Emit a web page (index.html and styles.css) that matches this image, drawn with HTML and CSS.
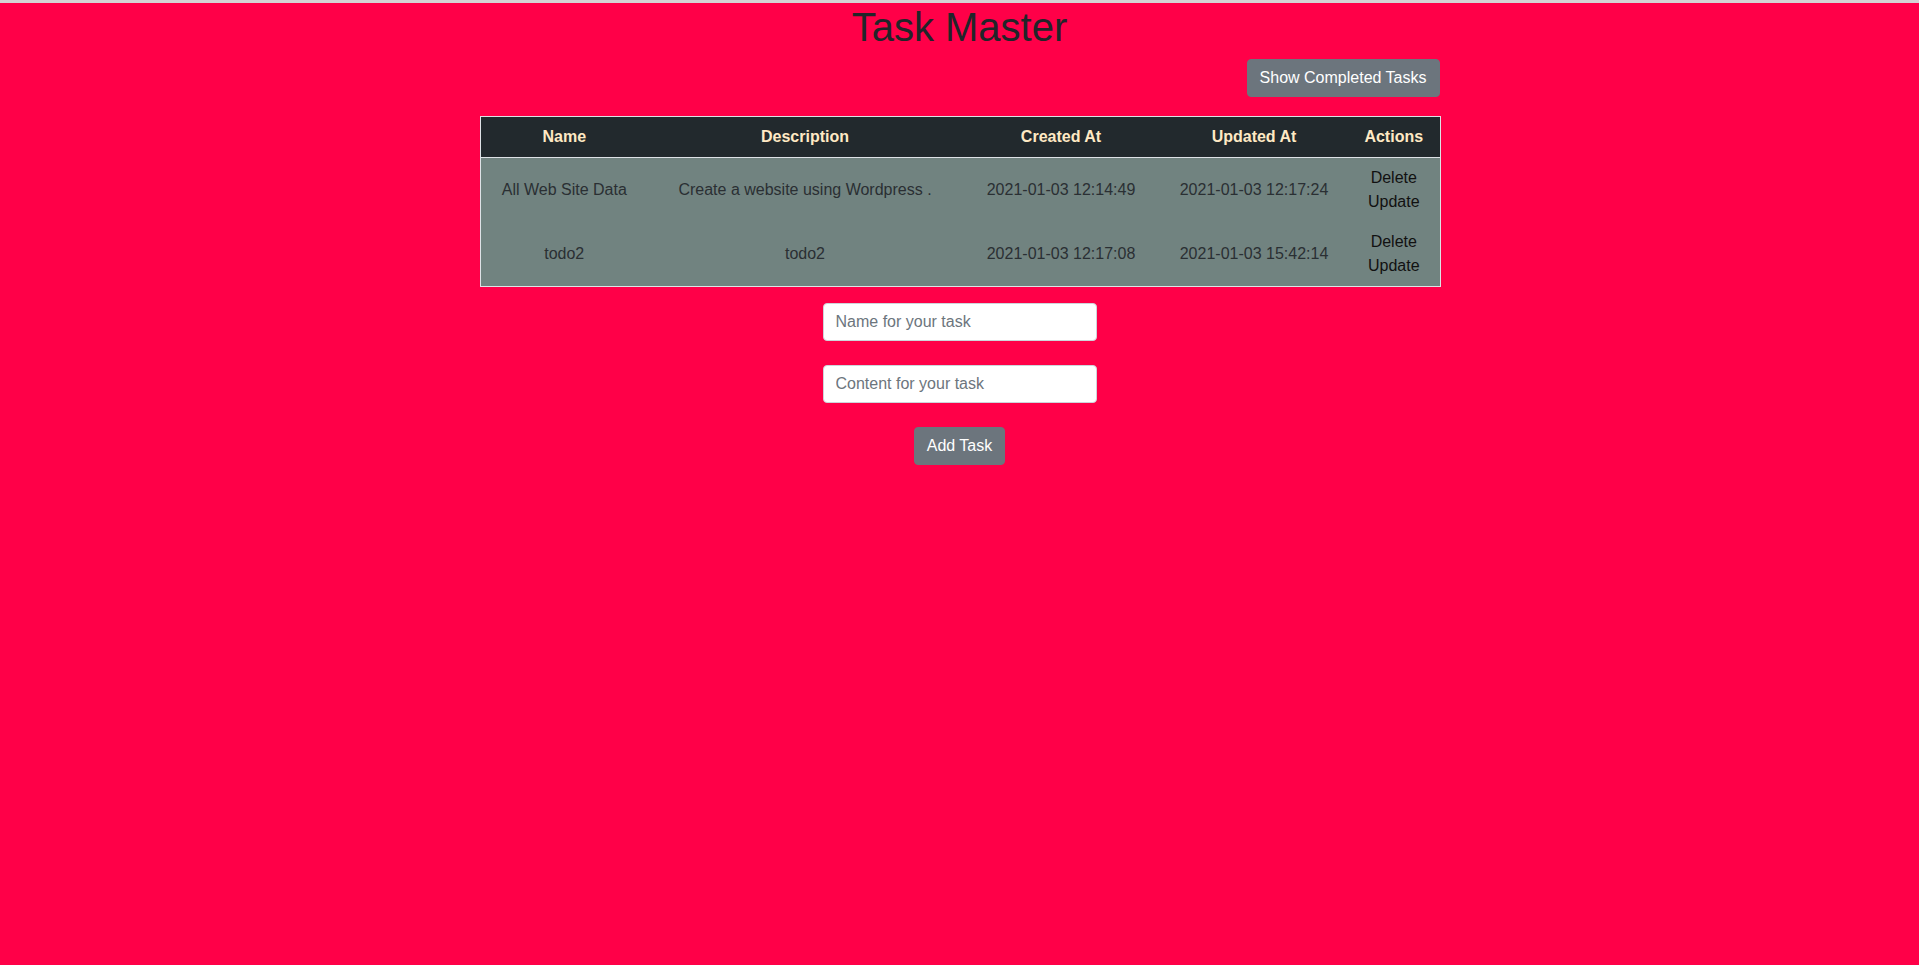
FILE: index.html
```html
<!DOCTYPE html>
<html lang="en">
<head>
<meta charset="utf-8">
<title>Task Master</title>
<link rel="stylesheet" href="styles.css">
</head>
<body>
  <h1 class="title">Task Master</h1>
  <div class="container">
    <div class="toolbar">
      <button class="btn">Show Completed Tasks</button>
    </div>
    <table class="tasks">
      <colgroup>
        <col class="c-name">
        <col class="c-desc">
        <col class="c-created">
        <col class="c-updated">
        <col class="c-actions">
      </colgroup>
      <thead>
        <tr>
          <th>Name</th>
          <th>Description</th>
          <th>Created At</th>
          <th>Updated At</th>
          <th>Actions</th>
        </tr>
      </thead>
      <tbody>
        <tr>
          <td>All Web Site Data</td>
          <td>Create a website using Wordpress .</td>
          <td>2021-01-03 12:14:49</td>
          <td>2021-01-03 12:17:24</td>
          <td class="actions"><a href="#">Delete</a><br><a href="#">Update</a></td>
        </tr>
        <tr>
          <td>todo2</td>
          <td>todo2</td>
          <td>2021-01-03 12:17:08</td>
          <td>2021-01-03 15:42:14</td>
          <td class="actions"><a href="#">Delete</a><br><a href="#">Update</a></td>
        </tr>
      </tbody>
    </table>
    <form class="task-form">
      <input class="field" type="text" placeholder="Name for your task">
      <input class="field" type="text" placeholder="Content for your task">
      <button class="btn" type="button">Add Task</button>
    </form>
  </div>
</body>
</html>
```
FILE: styles.css
```css
html, body {
  margin: 0;
  padding: 0;
}
body {
  background: #ff0048;
  border-top: 3px solid #d4d4d4;
  min-height: 962px;
  font-family: "Liberation Sans", Arial, sans-serif;
  font-size: 16px;
  line-height: 1.5;
  color: #212529;
}
.title {
  margin: 0 0 8px;
  text-align: center;
  font-size: 40px;
  font-weight: 500;
  line-height: 1.2;
  color: #212529;
}
.container {
  width: 960px;
  margin: 0 auto;
}
.toolbar {
  display: flex;
  justify-content: flex-end;
  margin-bottom: 19px;
}
.btn {
  font-family: inherit;
  font-size: 16px;
  line-height: 24px;
  padding: 6px 12px;
  border: 1px solid #6c757d;
  border-radius: 4px;
  background: #6c757d;
  color: #fff;
  cursor: pointer;
}
.tasks {
  width: 960px;
  border-collapse: collapse;
  table-layout: fixed;
  border: 1px solid #dee2e6;
  text-align: center;
}
.c-name { width: 168px; }
.c-desc { width: 314px; }
.c-created { width: 198px; }
.c-updated { width: 188px; }
.c-actions { width: 92px; }
.tasks thead th {
  background: #22292d;
  color: #ffe9c4;
  font-weight: 700;
  padding: 8px 4px;
  border-bottom: 1px solid #dee2e6;
}
.tasks tbody td {
  background: #718380;
  color: #2a2f33;
  padding: 8px 4px;
}
.actions a {
  color: #111;
  text-decoration: none;
}
.task-form {
  display: flex;
  flex-direction: column;
  align-items: center;
  gap: 24px;
  margin-top: 16px;
}
.field {
  box-sizing: border-box;
  width: 274px;
  height: 38px;
  padding: 6px 12px;
  font-family: inherit;
  font-size: 16px;
  border: 1px solid #ced4da;
  border-radius: 4px;
  background: #fff;
  color: #495057;
}
.field::placeholder {
  color: #6c757d;
}
```
